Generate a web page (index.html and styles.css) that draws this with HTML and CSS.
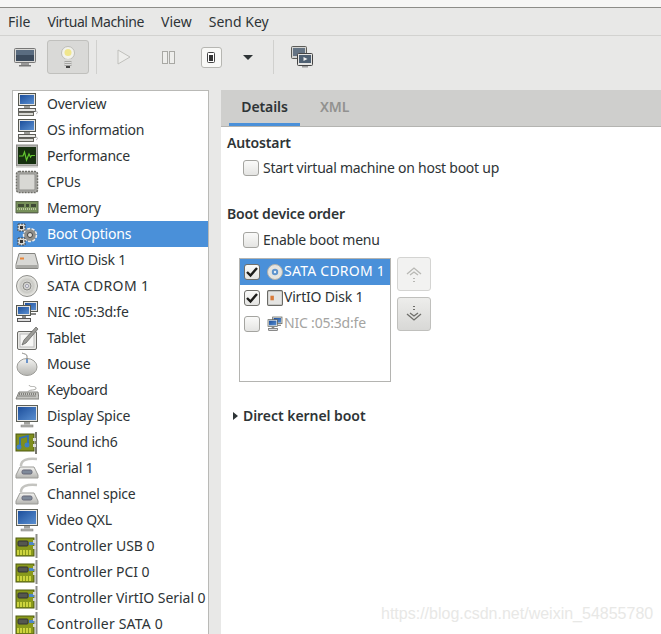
FILE: index.html
```html
<!DOCTYPE html>
<html lang="en">
<head>
<meta charset="utf-8">
<title>Virtual Machine</title>
<link rel="stylesheet" href="styles.css">
</head>
<body>
<svg class="defs" width="0" height="0" aria-hidden="true">
<defs>
<linearGradient id="scr" x1="0" y1="0" x2="1" y2="1"><stop offset="0" stop-color="#1d4f9c"/><stop offset="1" stop-color="#5a8fd0"/></linearGradient>
<linearGradient id="silver" x1="0" y1="0" x2="0" y2="1"><stop offset="0" stop-color="#f4f4f2"/><stop offset="1" stop-color="#b4b4b0"/></linearGradient>
<radialGradient id="disc"><stop offset="0" stop-color="#fafafa"/><stop offset=".6" stop-color="#c9c9c4"/><stop offset="1" stop-color="#eeeeea"/></radialGradient>
<symbol id="i-desktop" viewBox="0 0 24 24"><rect x="3.500" y="1.500" width="17" height="12" fill="#e4e4e2" stroke="#55574f"/><rect x="5" y="3" width="14" height="9" fill="url(#scr)"/><path d="M9 14h6v2H9z" fill="#9a9a96"/><rect x="3.500" y="16.500" width="17" height="3" fill="#e6e6e3" stroke="#5c5c58"/><rect x="3.500" y="20.500" width="15" height="3" fill="#d8d8d4" stroke="#66665f"/><path d="M20 19c3 0 3 2 1 3" fill="none" stroke="#aaa"/></symbol>
<symbol id="i-perf" viewBox="0 0 24 24"><rect x="1.500" y="1" width="21" height="21" fill="#b4b4b0" stroke="#8b8b87"/><rect x="3" y="3" width="18" height="17" fill="#16300f"/><path d="M4 12h4l1.500-4 2 8 2.500-6 1.500 3 1-1.500h3.500" fill="none" stroke="#63c62f" stroke-width="1.200"/><path d="M1 23h22" stroke="#d4d4d0" stroke-width="1.500"/></symbol>
<symbol id="i-cpu" viewBox="0 0 24 24"><rect x="1.500" y="1.500" width="21" height="21" rx="2.500" fill="#a9a9a5" stroke="#6f6f69" stroke-width="1.500" stroke-dasharray="2 1"/><rect x="4" y="4" width="16" height="16" rx="1" fill="#d8d8d4" stroke="#8f8f8b"/></symbol>
<symbol id="i-mem" viewBox="0 0 24 24"><rect x="1" y="5.500" width="22" height="11" fill="#77905a" stroke="#5c6a4c"/><path d="M3 8h6v3H3zM11 8h3v3h-3zM16 8h5v3h-5z" fill="#3f4a34"/><path d="M2 13h20" stroke="#b9c69c" stroke-dasharray="1 1" stroke-width="2"/><path d="M1 17.500h22" stroke="#bbb"/></symbol>
<symbol id="i-gears" viewBox="0 0 24 24"><circle cx="15" cy="13" r="6.500" fill="#8f8f8b" stroke="#eee" stroke-width="1.500" stroke-dasharray="3 1.500"/><circle cx="15" cy="13" r="2.500" fill="#dcdcd8" stroke="#444"/><rect x="3" y="2" width="7" height="7" fill="#d8d8d4" stroke="#444" stroke-dasharray="2 1"/><rect x="5" y="4" width="3" height="3" fill="#333"/><rect x="3" y="16" width="7" height="7" fill="#d8d8d4" stroke="#444" stroke-dasharray="2 1"/><rect x="5" y="18" width="3" height="3" fill="#333"/></symbol>
<symbol id="i-disk" viewBox="0 0 24 24"><path d="M4 5.500h16l3 11v4H1v-4z" fill="#d8d8d5" stroke="#858581"/><path d="M2 17h20v3H2z" fill="#a9a9a5"/><rect x="5" y="9.500" width="4" height="2" fill="#e8853a"/></symbol>
<symbol id="i-cd" viewBox="0 0 24 24"><circle cx="12" cy="12" r="10.500" fill="url(#disc)" stroke="#8e8e8a"/><circle cx="12" cy="12" r="4" fill="#d2d2ce" stroke="#8a8a86"/><circle cx="12" cy="12" r="1.500" fill="#fff" stroke="#99a"/></symbol>
<symbol id="i-cdsel" viewBox="0 0 16 16"><circle cx="8" cy="8" r="7.500" fill="#e4e4e0" stroke="#b0b0aa"/><circle cx="8" cy="8" r="3.200" fill="#5f94cc"/><circle cx="8" cy="8" r="1.200" fill="#e9f0f8"/></symbol>
<symbol id="i-nic" viewBox="0 0 24 24"><rect x="8.500" y="1.500" width="14" height="10" fill="#e4e4e2" stroke="#55574f"/><rect x="10" y="3" width="11" height="7" fill="url(#scr)"/><rect x="1.500" y="5.500" width="14" height="10" fill="#e4e4e2" stroke="#55574f"/><rect x="3" y="7" width="11" height="7" fill="url(#scr)"/><rect x="2.500" y="18.500" width="13" height="3" fill="#ddd" stroke="#555"/><path d="M7 16h4v2H7zM16 13h5v2h-5z" fill="#888"/></symbol>
<symbol id="i-tablet" viewBox="0 0 24 24"><rect x="2.500" y="5.500" width="19" height="18" rx="1.500" fill="#e8e8e5" stroke="#6a6a66"/><rect x="5" y="8" width="14" height="13" fill="#f7f7f5" stroke="#bbb"/><path d="M7 19l2-5L21 1l2 2L11 17z" fill="#9c9c98" stroke="#5f5f5b" stroke-width=".7"/></symbol>
<symbol id="i-mouse" viewBox="0 0 24 24"><ellipse cx="12" cy="15" rx="10" ry="8.500" fill="url(#silver)" stroke="#9d9d99"/><path d="M12 7V4C12 2 9 2 7 1" fill="none" stroke="#8a8a86"/><path d="M12 7v4" stroke="#6a93c9" stroke-width="2"/></symbol>
<symbol id="i-keyb" viewBox="0 0 24 24"><path d="M4 14h19l1 7H1z" fill="#c4c4c0" stroke="#83837f"/><path d="M4 16h17M3.500 18h18" stroke="#6a6a66" stroke-dasharray="1 1" stroke-width="1.300"/><path d="M13 14c0-3 9-1 8-4s-6 0-7-3" fill="none" stroke="#a9a9a5"/></symbol>
<symbol id="i-disp" viewBox="0 0 24 24"><rect x="1.500" y="1.500" width="21" height="16" fill="#e8e8e6" stroke="#5e6058"/><rect x="3" y="3" width="18" height="13" fill="url(#scr)"/><path d="M9 18h6v2.500H9z" fill="#a2a29e"/><rect x="6" y="21" width="12" height="2" fill="#b5b5b1" stroke="#777" stroke-width=".5"/></symbol>
<symbol id="i-sound" viewBox="0 0 24 24"><rect x="1" y="4" width="18" height="17" fill="#7f8e1d" stroke="#4e5a12"/><path d="M5 16V8l8-2v8" fill="none" stroke="#2f6fb8" stroke-width="1.800"/><circle cx="4" cy="17" r="2.500" fill="#3f7fc4"/><circle cx="12" cy="15" r="2.500" fill="#3f7fc4"/><path d="M20 2h2v22h-2z" fill="#77776f"/><rect x="18" y="8" width="3" height="3" fill="#ddd"/><rect x="18" y="14" width="3" height="3" fill="#ddd"/></symbol>
<symbol id="i-serial" viewBox="0 0 24 24"><path d="M6 10C6 4 12 2 22 3" fill="none" stroke="#c4c4c0" stroke-width="2.500"/><path d="M5 11h14l4 8v3H1v-3z" fill="url(#silver)" stroke="#9b9b97"/><rect x="7" y="14" width="10" height="4" rx="1.500" fill="#7f8a9a" stroke="#667"/></symbol>
<symbol id="i-card" viewBox="0 0 24 24"><rect x="1" y="4" width="18" height="18" fill="#8a9a1c" stroke="#4f5a10"/><rect x="3" y="7" width="10" height="5" rx="1" fill="#55574f" stroke="#333"/><rect x="14" y="8" width="5" height="3" fill="#4d86c7"/><path d="M3 16v5M6 16v5M9 16v5M12 16v5M15 16v5" stroke="#e4e84a" stroke-width="1.500"/><path d="M20.500 0h2v24h-2z" fill="#8b8b87"/><rect x="18" y="6" width="3" height="3" fill="#d5d5d1"/><rect x="18" y="12" width="3" height="3" fill="#d5d5d1"/></symbol>
</defs>
</svg>
<div class="window">
<div class="titlestub"></div>
<nav class="menubar"><span>File</span><span class="m-tight">Virtual Machine</span><span>View</span><span>Send Key</span></nav>
<div class="toolbar">
<button class="tool"><svg width="22" height="19" viewBox="0 0 22 19"><rect x=".5" y=".5" width="21" height="14" rx="1" fill="#d8d8d6" stroke="#777"/><rect x="2" y="2" width="18" height="11" fill="#3b4a5c"/><path d="M2 2h18v5H2z" fill="#5a6c80"/><path d="M7 15h8v2H7z" fill="#999"/><rect x="5" y="17" width="12" height="1.500" fill="#777"/></svg></button>
<button class="tool tool-on"><svg width="16" height="23" viewBox="0 0 16 23"><circle cx="8" cy="7" r="6.500" fill="#f2f2ec" stroke="#bdbdb8"/><circle cx="8" cy="6.500" r="3.500" fill="#f0e68c"/><path d="M5 13h6l-.5 2h-5z" fill="#d8d8d4"/><rect x="4.500" y="15" width="7" height="5" fill="#a5a5a1"/><path d="M4.500 16.500h7M4.500 18.500h7" stroke="#ddd"/><rect x="6" y="20" width="4" height="2" fill="#444"/></svg></button>
<span class="sep"></span>
<button class="tool"><svg width="14" height="16" viewBox="0 0 14 16"><path d="M1 1l12 7-12 7z" fill="#eeeeec" stroke="#c0c0bc"/></svg></button>
<button class="tool tool-pause"><svg width="13" height="13" viewBox="0 0 13 13"><rect x=".5" y=".5" width="5" height="12" fill="#eeeeec" stroke="#a8a8a4"/><rect x="7.500" y=".5" width="5" height="12" fill="#eeeeec" stroke="#a8a8a4"/></svg></button>
<button class="tool"><svg width="21" height="21" viewBox="0 0 21 21"><rect x=".5" y=".5" width="20" height="20" rx="2.500" fill="#f8f8f6" stroke="#b6b6b2"/><rect x="6.500" y="5.500" width="7" height="10" rx="1" fill="#fff" stroke="#444"/><rect x="8" y="8" width="4" height="6" fill="#333"/></svg></button>
<button class="tool tool-caret"><span class="caret"></span></button>
<span class="sep sep-b"></span>
<button class="tool"><svg width="22" height="22" viewBox="0 0 22 22"><rect x=".5" y=".5" width="15" height="12" rx="1" fill="#d4d4d2" stroke="#5c5c58"/><rect x="2" y="2" width="12" height="8" fill="#657484"/><rect x="6.500" y="7.500" width="15" height="12" rx="1" fill="#e4e4e2" stroke="#444"/><rect x="8" y="9" width="12" height="8" fill="#4f6072"/><path d="M12.500 11l4 2-4 2z" fill="#eee"/><path d="M11 20h6v1.500h-6z" fill="#999"/></svg></button>
</div>
<main class="main">
<ul class="hwlist">
<li><svg class="ico"><use href="#i-desktop"/></svg>Overview</li>
<li><svg class="ico"><use href="#i-desktop"/></svg>OS information</li>
<li><svg class="ico"><use href="#i-perf"/></svg>Performance</li>
<li><svg class="ico"><use href="#i-cpu"/></svg>CPUs</li>
<li><svg class="ico"><use href="#i-mem"/></svg>Memory</li>
<li class="sel"><svg class="ico"><use href="#i-gears"/></svg>Boot Options</li>
<li><svg class="ico"><use href="#i-disk"/></svg>VirtIO Disk 1</li>
<li class="caps"><svg class="ico"><use href="#i-cd"/></svg>SATA CDROM 1</li>
<li><svg class="ico"><use href="#i-nic"/></svg>NIC :05:3d:fe</li>
<li><svg class="ico"><use href="#i-tablet"/></svg>Tablet</li>
<li><svg class="ico"><use href="#i-mouse"/></svg>Mouse</li>
<li><svg class="ico"><use href="#i-keyb"/></svg>Keyboard</li>
<li><svg class="ico"><use href="#i-disp"/></svg>Display Spice</li>
<li><svg class="ico"><use href="#i-sound"/></svg>Sound ich6</li>
<li><svg class="ico"><use href="#i-serial"/></svg>Serial 1</li>
<li><svg class="ico"><use href="#i-serial"/></svg>Channel spice</li>
<li><svg class="ico"><use href="#i-disp"/></svg>Video QXL</li>
<li class="mid"><svg class="ico"><use href="#i-card"/></svg>Controller USB 0</li>
<li class="mid"><svg class="ico"><use href="#i-card"/></svg>Controller PCI 0</li>
<li class="mid"><svg class="ico"><use href="#i-card"/></svg>Controller VirtIO Serial 0</li>
<li class="wide"><svg class="ico"><use href="#i-card"/></svg>Controller SATA 0</li>
</ul>
<section class="pane">
<div class="tabs"><span class="tab tab-on">Details</span><span class="tab tab-off">XML</span></div>
<div class="content">
<h2 class="head">Autostart</h2>
<label class="check"><span class="box"></span>Start virtual machine on host boot up</label>
<h2 class="head head-b">Boot device order</h2>
<label class="check check-b"><span class="box"></span>Enable boot menu</label>
<div class="boot">
<ul class="bootlist">
<li class="sel caps"><span class="box box-sm on"><svg width="14" height="12" viewBox="0 0 14 12"><path d="M2 6l3.500 3.500L12 2" fill="none" stroke="#1c1c1a" stroke-width="2.400"/></svg></span><svg class="ico-sm"><use href="#i-cdsel"/></svg>SATA CDROM 1</li>
<li><span class="box box-sm on"><svg width="14" height="12" viewBox="0 0 14 12"><path d="M2 6l3.500 3.500L12 2" fill="none" stroke="#1c1c1a" stroke-width="2.400"/></svg></span><svg class="ico-sm" viewBox="0 0 14 14"><rect x=".5" y=".5" width="13" height="13" rx="1" fill="#e4e4e2" stroke="#6a6a66"/><rect x="3" y="5" width="3" height="4" fill="#d97b3a"/></svg>VirtIO Disk 1</li>
<li class="off"><span class="box box-sm"></span><svg class="ico-sm"><use href="#i-nic"/></svg>NIC :05:3d:fe</li>
</ul>
<div class="arrows">
<button class="arrow arrow-off"><svg width="18" height="20" viewBox="0 0 18 20"><path d="M2 10l7-6 7 6M5 11l4-3 4 3" fill="none" stroke="#b8b8b4" stroke-width="1.300"/><path d="M9 14v1M9 17v1" stroke="#b8b8b4" stroke-width="2"/></svg></button>
<button class="arrow"><svg width="18" height="20" viewBox="0 0 18 20"><path d="M9 2v1M9 5v1" stroke="#6e6e6a" stroke-width="2"/><path d="M2 10l7 6 7-6M5 9l4 3 4-3" fill="none" stroke="#6e6e6a" stroke-width="1.300"/></svg></button>
</div>
</div>
<div class="expander"><span class="tri"></span>Direct kernel boot</div>
</div>
</section>
</main>
<span class="watermark">https://blog.csdn.net/weixin_54855780</span>
</div>
</body>
</html>
```
FILE: styles.css
```css
* { box-sizing: border-box; }
html, body { margin: 0; height: 100%; overflow: hidden; }
body { font-family: "Noto Sans", sans-serif; font-size: 14px; color: #2e3436; background: #e8e8e7; }
.defs { position: absolute; }
ul { list-style: none; margin: 0; padding: 0; }
button { padding: 0; border: 0; background: none; font: inherit; }
.window { position: relative; height: 634px; overflow: hidden; display: flex; flex-direction: column; }
.titlestub { height: 8px; background: #f6f6f5; border-bottom: 1px solid #8d8d89; }
.menubar { height: 28px; flex: none; display: flex; align-items: center; gap: 17px; padding: 0 8px; border-bottom: 1px solid #d2d2d0; }
.m-tight { letter-spacing: -.4px; }
.toolbar { height: 54px; flex: none; display: flex; align-items: flex-start; padding: 4px 0 0 4px; }
.tool { width: 42px; height: 34px; margin-right: 1px; display: flex; align-items: center; justify-content: center; border: 1px solid transparent; border-radius: 3px; }
.tool-on { background: #d9d9d7; border-color: #c0c0bd; }
.tool-pause { margin-left: 1px; }
.tool-caret { width: 30px; }
.caret { width: 0; height: 0; border: 5px solid transparent; border-top: 5px solid #2e3436; border-bottom: 0; }
.sep { width: 1px; height: 34px; background: #d0d0ce; margin: 0 6px; flex: none; }
.sep-b { margin: 0 7px 0 9px; }
.main { flex: 1; display: flex; gap: 12px; padding-left: 12px; min-height: 0; }
.hwlist { width: 197px; flex: none; background: #fff; border: 1px solid #b9b9b6; border-bottom: 0; letter-spacing: -.22px; }
.hwlist li { height: 26px; line-height: 26px; display: flex; align-items: flex-start; gap: 8px; padding-left: 2px; white-space: nowrap; }
.hwlist li.sel { background: #4a90d9; color: #fff; }
.hwlist li.caps, .bootlist li.caps { letter-spacing: .35px; }
.hwlist li.mid { letter-spacing: -.05px; }
.hwlist li.wide { letter-spacing: .2px; }
.hwlist li > span { display: block; }
.ico { width: 24px; height: 24px; flex: none; margin-top: 1px; }
.pane { flex: 1; background: #fff; display: flex; flex-direction: column; }
.tabs { height: 37px; flex: none; display: flex; padding-left: 8px; background: #cfcfcd; border-bottom: 1px solid #b4b4b1; font-weight: 600; letter-spacing: -.1px; }
.tab { height: 36px; display: flex; align-items: center; }
.tab-on { width: 71px; justify-content: center; border-bottom: 3px solid #4a90d9; }
.tab-off { margin-left: 20px; padding-bottom: 3px; color: #929290; }
.content { padding: 6px 6px; }
.head { margin: 0; height: 20px; font-size: 14px; line-height: 20px; font-weight: 600; color: #2e3436; letter-spacing: -.15px; }
.head-b { margin-top: 26px; }
.check { display: flex; align-items: flex-start; gap: 4px; height: 20px; line-height: 20px; margin: 5px 0 0 16px; letter-spacing: -.25px; }
.check-b { margin-top: 6px; }
.check .box { margin-top: 2px; }
.box { width: 16px; height: 16px; flex: none; display: flex; align-items: center; justify-content: center; background: linear-gradient(#fafaf9, #e4e4e2); border: 1px solid #a4a4a0; border-radius: 3px; }
.boot { display: flex; gap: 6px; margin: 8px 0 0 12px; align-items: flex-start; }
.bootlist { width: 152px; height: 124px; background: #fff; border: 1px solid #b4b4b1; color: #2e3436; letter-spacing: -.2px; }
.bootlist li { height: 26px; line-height: 24px; display: flex; align-items: flex-start; padding-left: 4px; white-space: nowrap; }
.bootlist li.sel { background: #4a90d9; color: #fff; letter-spacing: .25px; }
.bootlist li.off { color: #a4a4a2; }
.box-sm { margin-top: 5px; }
.box-sm.on { border-color: #6f6f6b; }
.ico-sm { width: 16px; height: 16px; margin: 5px 1px 0 7px; flex: none; }
.arrows { display: flex; flex-direction: column; gap: 6px; margin-top: -1px; }
.arrow { width: 34px; height: 34px; display: flex; align-items: center; justify-content: center; border: 1px solid #c0c0bd; border-radius: 3px; background: linear-gradient(#ededeb, #d8d8d6); }
.arrow-off { background: #f2f2f1; border-color: #d4d4d2; }
.expander { display: flex; align-items: flex-start; gap: 5px; margin-top: 25px; padding-left: 6px; font-weight: 600; height: 20px; line-height: 18px; letter-spacing: -.05px; }
.tri { width: 0; height: 0; margin-top: 5px; border: 4.500px solid transparent; border-left: 5px solid #2e3436; border-right: 0; }
.watermark { position: absolute; left: 381px; top: 605px; font: 16px "Liberation Sans", sans-serif; color: #e8e8e6; }
```
